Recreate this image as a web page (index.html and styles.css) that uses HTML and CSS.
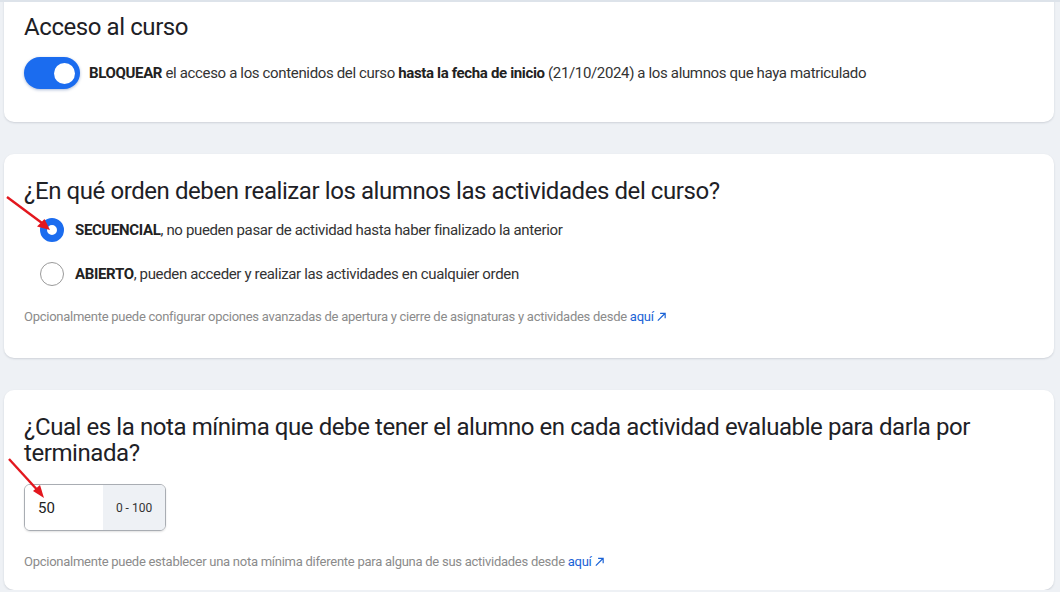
FILE: index.html
```html
<!DOCTYPE html>
<html>
<head>
    <title>Configuración del curso</title>
    <link rel="stylesheet" href="styles.css">
</head>
<body>
    <div class="page">
        <div class="card card-first">
            <h2>Acceso al curso</h2>
            <div class="toggle-row">
                <span class="switch on"><span class="knob"></span></span>
                <span class="text"><strong>BLOQUEAR</strong> el acceso a los contenidos del curso <strong>hasta la fecha de inicio</strong> (21/10/2024) a los alumnos que haya matriculado</span>
            </div>
        </div>

        <div class="card">
            <h2>¿En qué orden deben realizar los alumnos las actividades del curso?</h2>
            <div class="options">
                <label class="option">
                    <span class="radio checked"></span>
                    <span class="text"><strong>SECUENCIAL</strong>, no pueden pasar de actividad hasta haber finalizado la anterior</span>
                </label>
                <label class="option">
                    <span class="radio"></span>
                    <span class="text"><strong>ABIERTO</strong>, pueden acceder y realizar las actividades en cualquier orden</span>
                </label>
            </div>
            <p class="hint">Opcionalmente puede configurar opciones avanzadas de apertura y cierre de asignaturas y actividades desde <a href="#">aquí<svg class="ext" viewBox="0 0 12 12"><path d="M2 10.5L10 2.5M4.5 2.5H10V8" fill="none" stroke="currentColor" stroke-width="1.3"/></svg></a></p>
            <svg class="pointer pointer-1" viewBox="0 0 50 40"><path d="M1 1L40 30" stroke="#e3171e" stroke-width="2.4" fill="none"/><path d="M44 34L31 30.5L38.5 23Z" fill="#e3171e"/></svg>
        </div>

        <div class="card card-last">
            <h2>¿Cual es la nota mínima que debe tener el alumno en cada actividad evaluable para darla por terminada?</h2>
            <div class="grade">
                <span class="grade-value">50</span>
                <span class="grade-range">0 - 100</span>
            </div>
            <p class="hint">Opcionalmente puede establecer una nota mínima diferente para alguna de sus actividades desde <a href="#">aquí<svg class="ext" viewBox="0 0 12 12"><path d="M2 10.5L10 2.5M4.5 2.5H10V8" fill="none" stroke="currentColor" stroke-width="1.3"/></svg></a></p>
            <svg class="pointer pointer-2" viewBox="0 0 50 40"><path d="M1 1L33 36" stroke="#e3171e" stroke-width="2.4" fill="none"/><path d="M36 40L25 33L32 27Z" fill="#e3171e"/></svg>
        </div>
    </div>
</body>
</html>
```

FILE: styles.css
```css
body {
    margin: 0;
    background: #eef1f5;
    font-family: Roboto, "Liberation Sans", sans-serif;
    color: #2b2b2b;
    overflow: hidden;
    border-top: 2px solid #dde3ea;
}
.page {
    padding: 0 6px 0 4px;
    display: flex;
    flex-direction: column;
    gap: 32px;
}
.card {
    position: relative;
    background: #fff;
    border-radius: 10px;
    padding: 24px 20px 34px;
    box-shadow: 0 1px 2px rgba(60, 70, 90, 0.18);
}
.card-first {
    margin-top: -12px;
    border-radius: 0 0 10px 10px;
    padding-bottom: 33px;
}
.card-last {
    padding-bottom: 21px;
}
h2 {
    margin: 0;
    font-size: 24px;
    line-height: 26px;
    font-weight: 400;
    color: #1e2126;
    letter-spacing: -0.42px;
}
.text {
    font-size: 15px;
    letter-spacing: -0.35px;
    color: #333;
}
.text strong {
    font-weight: 700;
    color: #222;
}
.toggle-row {
    display: flex;
    align-items: center;
    gap: 9px;
    margin-top: 17px;
}
.switch {
    width: 56px;
    height: 32px;
    border-radius: 16px;
    background: #1b6cef;
    display: flex;
    align-items: center;
    justify-content: flex-end;
    padding: 0 5px;
    box-sizing: border-box;
    box-shadow: 0 1px 3px rgba(20, 60, 140, 0.35);
}
.knob {
    width: 21px;
    height: 21px;
    border-radius: 50%;
    background: #fff;
}
.options {
    display: flex;
    flex-direction: column;
    gap: 20px;
    margin-top: 14px;
}
.option {
    display: flex;
    align-items: center;
    gap: 11px;
}
.radio {
    width: 24px;
    height: 24px;
    border-radius: 50%;
    border: 1px solid #9a9a9a;
    box-sizing: border-box;
    background: #fff;
    margin-left: 16px;
}
.radio.checked {
    border: 7px solid #1b6cef;
}
.hint {
    margin: 23px 0 0;
    font-size: 13px;
    color: #8b8b8b;
    letter-spacing: -0.26px;
}
.hint a {
    color: #1b63d6;
    text-decoration: none;
}
.ext {
    width: 11px;
    height: 11px;
    margin-left: 2px;
    vertical-align: -1px;
}
.grade {
    display: inline-flex;
    margin-top: 18px;
    height: 47px;
    width: 142px;
    border: 1px solid #a9adb3;
    border-radius: 6px;
    overflow: hidden;
    box-sizing: border-box;
    box-shadow: 0 1px 2px rgba(0, 0, 0, 0.12);
}
.grade-value {
    flex: 1;
    display: flex;
    align-items: center;
    padding-left: 13px;
    font-size: 15px;
    color: #222;
    background: #fff;
}
.grade-range {
    width: 62px;
    display: flex;
    align-items: center;
    justify-content: center;
    background: #eef1f5;
    font-size: 12px;
    color: #333;
}
.card .grade + .hint {
    margin-top: 23px;
}
.pointer {
    position: absolute;
    width: 50px;
    height: 40px;
}
.pointer-1 {
    left: 2px;
    top: 42px;
}
.pointer-2 {
    left: 4px;
    top: 68px;
}
```
